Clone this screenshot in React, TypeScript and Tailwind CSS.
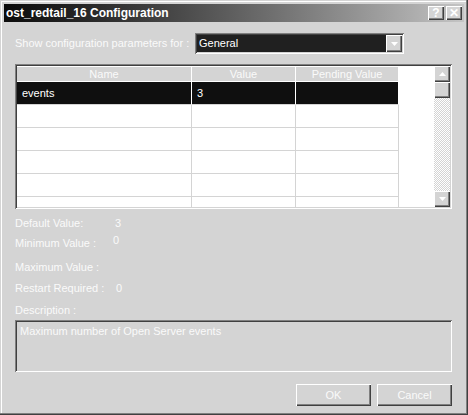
import React from 'react';

const sunken =
  'shadow-[inset_1px_1px_0_#808080,inset_-1px_-1px_0_#ffffff,inset_2px_2px_0_#404040,inset_-2px_-2px_0_#d4d4d4]';
const raised =
  'shadow-[inset_1px_1px_0_#ffffff,inset_-1px_-1px_0_#404040,inset_-2px_-2px_0_#808080]';

function Tri({ up = false }: { up?: boolean }) {
  return (
    <svg width="7" height="4" viewBox="0 0 7 4" className="block">
      <polygon points={up ? '3.5,0 7,4 0,4' : '0,0 7,0 3.5,4'} fill="#ffffff" />
    </svg>
  );
}

function TitleButton({ label }: { label: string }) {
  return (
    <div className={`w-[16px] h-[14px] bg-[#d4d4d4] ${raised} flex items-center justify-center text-[12px] font-bold leading-none text-white`}>
      {label}
    </div>
  );
}

const cols = ['w-[175px]', 'w-[104px]', 'w-[103px]'];

function Row({ cells, selected = false }: { cells: string[]; selected?: boolean }) {
  return (
    <div className="flex h-[23px] shrink-0">
      {cols.map((w, i) => (
        <div
          key={i}
          className={`${w} border-r border-b border-b-[#d4d4d4] flex items-center pl-[5px] ${
            selected ? 'bg-[#0f0f0f] border-r-white text-white' : 'border-r-[#d4d4d4]'
          }`}
        >
          {cells[i] ?? ''}
        </div>
      ))}
    </div>
  );
}

export default function App() {
  return (
    <div
      className={`w-[468px] h-[415px] bg-[#d4d4d4] p-[4px] flex flex-col font-['Liberation_Sans',Arial,sans-serif] text-[11px] text-[#fafafa] shadow-[inset_-1px_-1px_0_#404040,inset_-2px_-2px_0_#808080,inset_1px_1px_0_#d4d4d4,inset_2px_2px_0_#ffffff]`}
    >
      {/* Title bar */}
      <div className="h-[18px] shrink-0 flex items-center pl-[2px] pr-[2px] bg-gradient-to-r from-[#0c0c0c] to-[#c4c4c4]">
        <span className="font-bold text-[12px] text-white leading-none">ost_redtail_16 Configuration</span>
        <div className="ml-auto flex gap-[2px]">
          <TitleButton label="?" />
          <TitleButton label="✕" />
        </div>
      </div>

      <div className="flex flex-col pl-[11px] pr-[12px]">
        {/* Parameter group selector */}
        <div className="mt-[11px] h-[21px] flex items-center">
          <span className="w-[180px]">Show configuration parameters for :</span>
          <div className={`w-[209px] h-[21px] p-[2px] bg-[#202020] ${sunken} flex`}>
            <span className="flex-1 pl-[2px] flex items-center text-white">General</span>
            <div className={`w-[16px] bg-[#d4d4d4] ${raised} flex items-center justify-center`}>
              <Tri />
            </div>
          </div>
        </div>

        {/* Parameter grid */}
        <div className={`mt-[10px] h-[145px] p-[2px] bg-white ${sunken} flex`}>
          <div className="flex-1 flex flex-col pt-px overflow-hidden">
            <div className="flex h-[15px] shrink-0 border-b border-white">
              {['Name', 'Value', 'Pending Value'].map((h, i) => (
                <div key={h} className={`${cols[i]} border-r border-white bg-[#d4d4d4] flex items-center justify-center`}>
                  {h}
                </div>
              ))}
            </div>
            <Row cells={['events', '3', '']} selected />
            <Row cells={[]} />
            <Row cells={[]} />
            <Row cells={[]} />
            <Row cells={[]} />
            <Row cells={[]} />
          </div>
          <div className="w-[16px] flex flex-col">
            <div className={`h-[16px] bg-[#d4d4d4] ${raised} flex items-center justify-center`}>
              <Tri up />
            </div>
            <div className={`h-[16px] bg-[#d4d4d4] ${raised}`} />
            <div className="flex-1 bg-[repeating-conic-gradient(#d4d4d4_0_25%,#ffffff_0_50%)] bg-[length:2px_2px]" />
            <div className={`h-[16px] bg-[#d4d4d4] ${raised} flex items-center justify-center`}>
              <Tri />
            </div>
          </div>
        </div>

        {/* Details */}
        <div className="mt-[7px] h-[14px] flex items-center">
          <span className="w-[100px]">Default Value:</span>
          <span>3</span>
        </div>
        <div className="mt-[6px] h-[14px] flex items-center">
          <span className="w-[98px]">Minimum Value :</span>
          <span className="mb-[6px]">0</span>
        </div>
        <div className="mt-[10px] h-[14px] flex items-center">
          <span>Maximum Value :</span>
        </div>
        <div className="mt-[7px] h-[14px] flex items-center">
          <span className="w-[101px]">Restart Required :</span>
          <span>0</span>
        </div>
        <div className="mt-[8px] h-[14px] flex items-center">
          <span>Description :</span>
        </div>
        <div className={`mt-[3px] h-[52px] px-[5px] py-[3px] ${sunken}`}>
          Maximum number of Open Server events
        </div>

        {/* Buttons */}
        <div className="mt-[12px] flex justify-end gap-[6px]">
          <button className={`w-[75px] h-[22px] bg-[#d4d4d4] ${raised} text-[#fafafa]`}>OK</button>
          <button className={`w-[75px] h-[22px] bg-[#d4d4d4] ${raised} text-[#fafafa]`}>Cancel</button>
        </div>
      </div>
    </div>
  );
}
